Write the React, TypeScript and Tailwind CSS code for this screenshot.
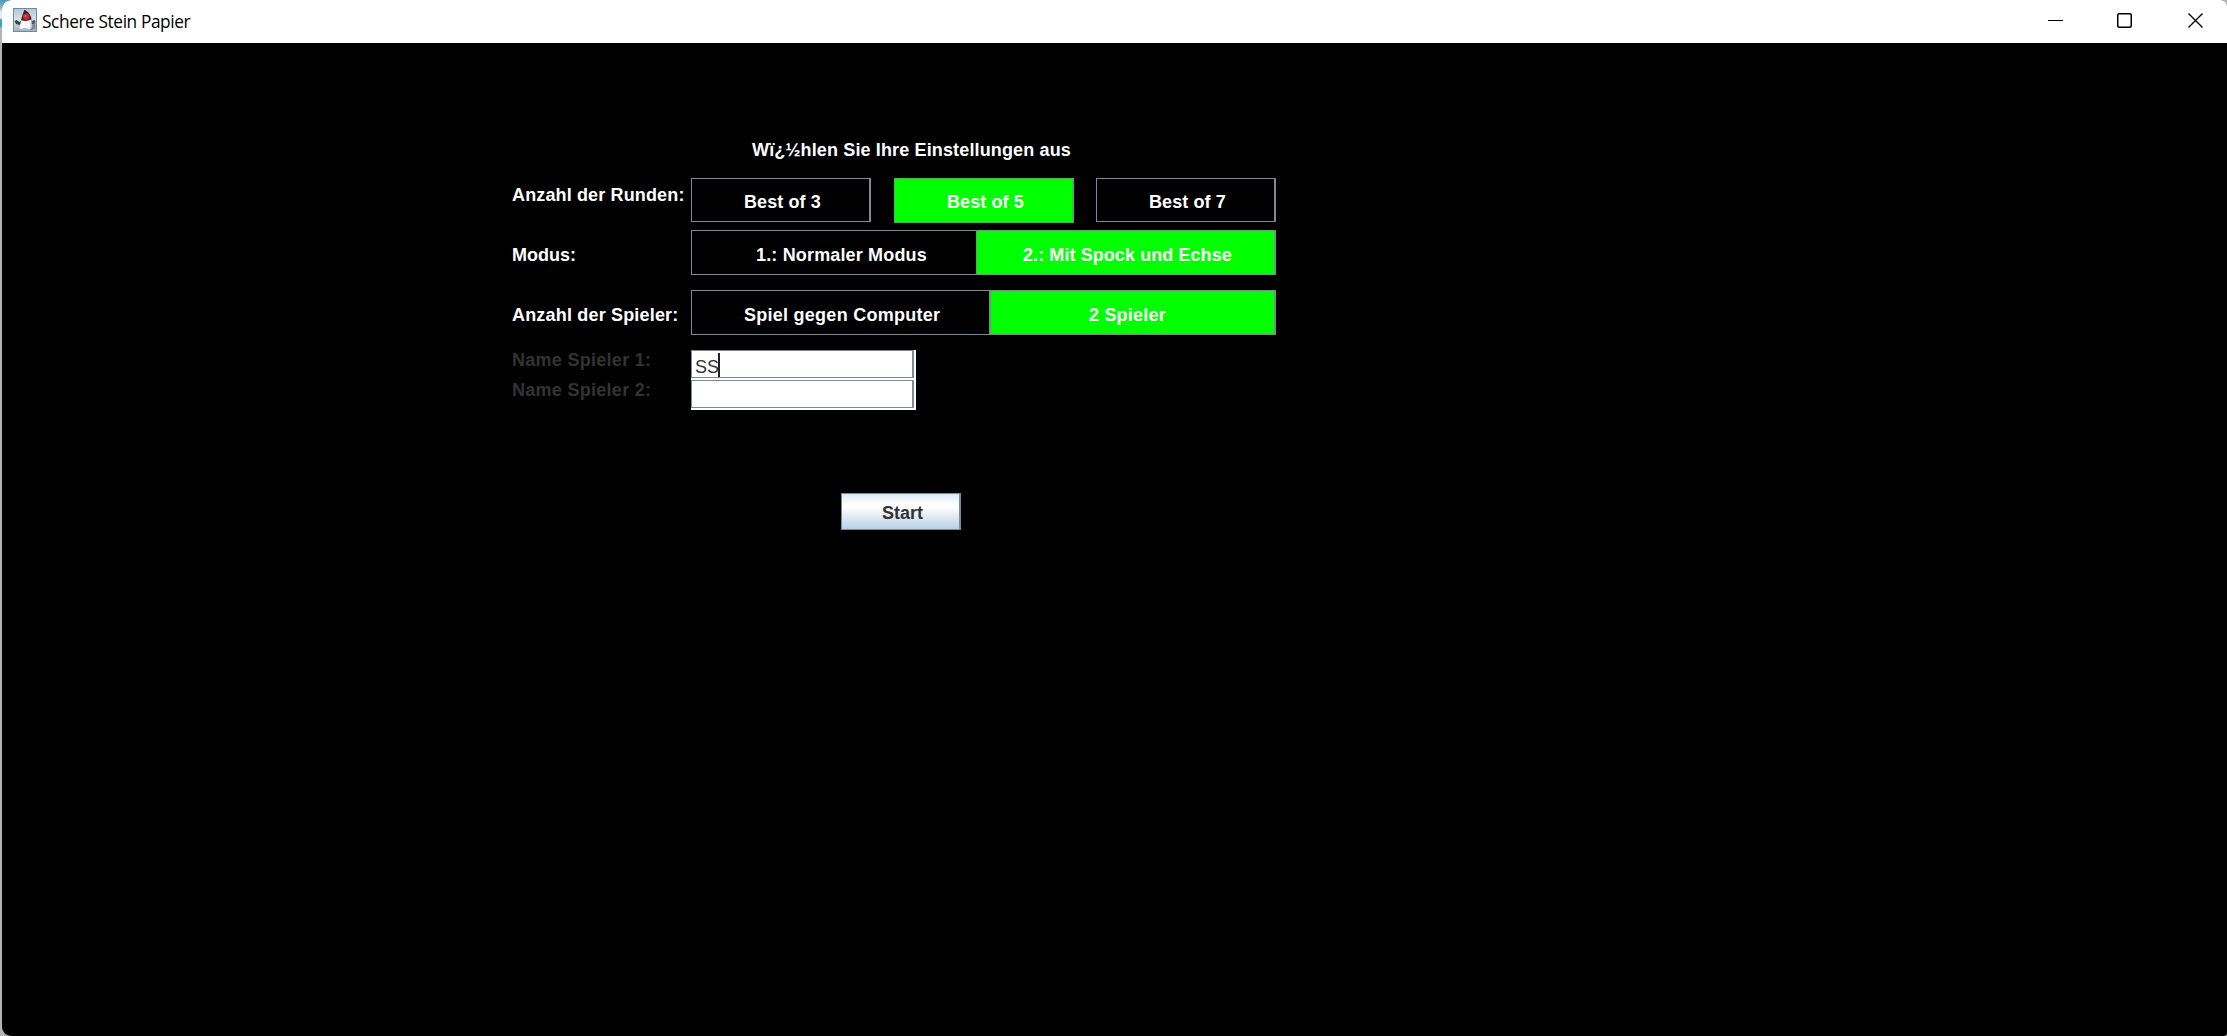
import React from "react";

function DukeIcon() {
  return (
    <svg width="24" height="24" viewBox="0 0 24 24" className="block">
      <defs>
        <linearGradient id="tile" x1="0" y1="0" x2="0" y2="1">
          <stop offset="0" stopColor="#b4c6d4" />
          <stop offset="0.5" stopColor="#d9e3ea" />
          <stop offset="1" stopColor="#a3b0bb" />
        </linearGradient>
      </defs>
      <rect x="0.5" y="0.5" width="23" height="23" fill="url(#tile)" stroke="#6f8ba3" />
      <path d="M15 20 L22.500 14 V20.500 L18 22.500 Z" fill="#7d8c98" />
      <path d="M9 12 L6.500 14 L3.500 12 L1.500 13 L3 16 L6.500 17 L8.500 16 Z" fill="#3b434b" />
      <path d="M17 12 L20 13 L21 11.500 L22.500 13 L21.500 15.500 L18 16.500 Z" fill="#4a545d" />
      <path d="M9 11 Q7 15 6.500 20.500 Q8 21.500 10.500 20 Q13 19.500 15.500 21 Q17.500 22 18.500 20 Q19 15 18 10.500 Q13 14 9 11 Z" fill="#f5f7f8" />
      <path d="M16.500 13 Q18.500 16 18.300 20.500 L16.800 21 Q17.500 17 16.500 13 Z" fill="#cbd3d9" />
      <path d="M11.500 1.500 Q9.500 6 8 12 Q13 14 18.500 11.500 Q18 5.500 11.500 1.500 Z" fill="#2c2d31" />
      <circle cx="13.200" cy="8.800" r="3.200" fill="#dc2029" />
      <circle cx="12.500" cy="8" r="1" fill="#f0605f" />
    </svg>
  );
}

function TitleBar() {
  return (
    <header className="flex h-[43px] items-start bg-white text-black">
      <div className="pl-[11px] pt-2">
        <DukeIcon />
      </div>
      <h1 className="ml-[5px] mt-[10px] whitespace-nowrap font-['Open_Sans','Noto_Sans',sans-serif] text-[17.3px] leading-6 tracking-[-0.4px]">
        Schere Stein Papier
      </h1>
      <div className="ml-auto flex pr-[24px] pt-[13px]">
        <svg className="mr-[54px]" width="15" height="15" viewBox="0 0 15 15">
          <path d="M0 7.500H15" stroke="#000" />
        </svg>
        <svg className="mr-[56px]" width="15" height="15" viewBox="0 0 15 15" fill="none">
          <rect x="0.750" y="0.750" width="13.500" height="13.500" rx="1.500" stroke="#000" strokeWidth="1.500" />
        </svg>
        <svg width="15" height="15" viewBox="0 0 15 15">
          <path d="M0.500 0.500L14.500 14.500M14.500 0.500L0.500 14.500" stroke="#000" strokeWidth="1.400" />
        </svg>
      </div>
    </header>
  );
}

function Label({ className, children }: { className: string; children: React.ReactNode }) {
  return <div className={`w-[179px] shrink-0 whitespace-nowrap ${className}`}>{children}</div>;
}

function Choice({ className, children }: { className: string; children: React.ReactNode }) {
  return (
    <button className={`flex shrink-0 items-start whitespace-nowrap border text-left ${className}`}>{children}</button>
  );
}

function NameField({ children }: { children?: React.ReactNode }) {
  return (
    <div className="h-[30px] w-[225px] bg-white pr-[2px] pb-[2px]">
      <div className="flex h-7 border border-r-2 border-[#7a8a99] pl-[3px] pt-[2px] font-normal text-[#333]">
        {children}
      </div>
    </div>
  );
}

export default function App() {
  return (
    <div className="h-[1036px] w-[2227px] overflow-hidden bg-[#b4b4b4] bg-[linear-gradient(180deg,#4a9fb8_0px,#7fb9c8_8px,#e4eef0_12px,#e4eef0_18px,#35a3c4_20px,#35a3c4_26px,#b4b4b4_28px)] bg-[length:12px_100%] bg-no-repeat pl-[2px]">
      <div className="h-full overflow-hidden rounded-tl-[9px] rounded-tr-[6px] rounded-bl-[9px] rounded-br-[3px] bg-black">
        <TitleBar />
        <main className="pl-[510px] pt-[97px] font-['Liberation_Sans',Arial,sans-serif] text-[18px] font-bold leading-5 text-white">
          <h2 className="pl-[240px] whitespace-nowrap tracking-[0.14px]">Wï¿½hlen Sie Ihre Einstellungen aus</h2>
          <div className="mt-[18px] flex h-[52px]">
            <Label className="pt-[7px] tracking-[0.14px]">Anzahl der Runden:</Label>
            <Choice className="h-11 w-[180px] border-r-2 border-[#7a8a99] pl-[52px] pt-[13px] tracking-[0.1px]">Best of 3</Choice>
            <Choice className="ml-[23px] h-[45px] w-[180px] border-r-2 border-[#3dbc4d] bg-[#00ff00] pl-[52px] pt-[13px] tracking-[0.1px]">Best of 5</Choice>
            <Choice className="ml-[22px] h-11 w-[180px] border-r-2 border-[#7a8a99] pl-[52px] pt-[13px] tracking-[0.1px]">Best of 7</Choice>
          </div>
          <div className="flex h-[60px]">
            <Label className="pt-[15px]">Modus:</Label>
            <Choice className="h-[45px] w-[285px] border-r-0 border-[#7a8a99] pl-[64px] pt-[14px] tracking-[0.16px]">1.: Normaler Modus</Choice>
            <Choice className="h-[45px] w-[300px] border-r-2 border-[#5ca572] bg-[#00ff00] pl-[46px] pt-[14px] tracking-[0.08px]">2.: Mit Spock und Echse</Choice>
          </div>
          <div className="flex h-[60px]">
            <Label className="pt-[15px] tracking-[0.18px]">Anzahl der Spieler:</Label>
            <Choice className="h-[45px] w-[298px] border-r-0 border-[#7a8a99] pl-[52px] pt-[14px] tracking-[0.26px]">Spiel gegen Computer</Choice>
            <Choice className="h-[45px] w-[287px] border-x-2 border-[#6f937f] bg-[#00ff00] pl-[98px] pt-[14px] tracking-[0.2px]">2 Spieler</Choice>
          </div>
          <div className="flex h-[30px] tracking-[0.28px] text-[#333]">
            <Label className="">Name Spieler 1:</Label>
            <NameField>
              <span className="pt-1 tracking-normal">SS</span>
              <span className="-ml-px h-6 w-[2px] bg-[#222]" />
            </NameField>
          </div>
          <div className="flex h-[30px] tracking-[0.28px] text-[#333]">
            <Label className="">Name Spieler 2:</Label>
            <NameField />
          </div>
          <button className="ml-[329px] mt-[83px] flex h-[37px] w-[120px] items-start border border-r-2 border-[#7a8a99] bg-[linear-gradient(180deg,#dde8f3_0%,#ffffff_30%,#ffffff_38%,#b8cfe5_100%)] pl-[40px] pt-[9px] text-left text-[#333]">
            Start
          </button>
        </main>
      </div>
    </div>
  );
}
